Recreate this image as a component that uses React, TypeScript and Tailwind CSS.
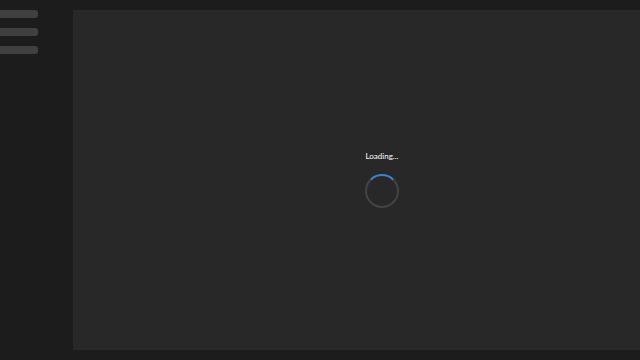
import React from "react";

export default function App() {
  return (
    <div className="w-[640px] h-[360px] overflow-hidden bg-[#1c1c1c] flex" style={{ fontFamily: "Lato, 'Open Sans', sans-serif" }}>
      {/* Sidebar skeleton */}
      <aside className="w-[73px] shrink-0 flex flex-col gap-[10px] pt-[10px]">
        {[0, 1, 2].map((i) => (
          <div key={i} className="w-[38px] h-[8px] rounded-r-[3px] bg-[#404040]" />
        ))}
      </aside>

      {/* Main */}
      <main className="mt-[10px] h-[340px] w-[618px] shrink-0 bg-[#282828] flex flex-col items-center justify-center">
        <p className="text-[8px] text-white mb-[12px] mt-[-2px]">Loading...</p>
        <div className="w-[34px] h-[34px] rounded-full border-2 border-[#444444] border-t-[#3b82d6]" />
      </main>
    </div>
  );
}
